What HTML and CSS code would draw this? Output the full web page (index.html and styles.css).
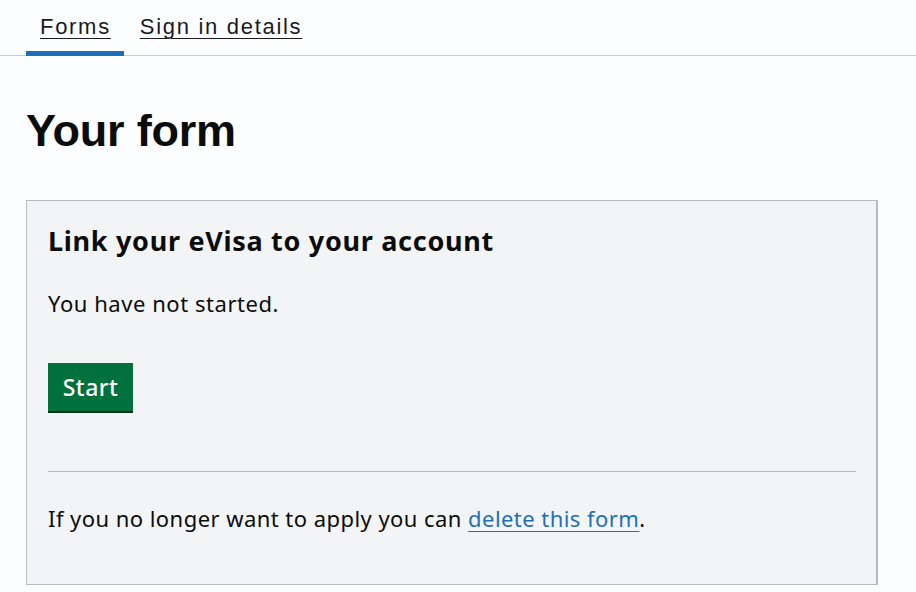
FILE: index.html
```html
<!DOCTYPE html>
<html lang="en">
<head>
<meta charset="utf-8">
<title>Your form</title>
<link rel="stylesheet" href="styles.css">
</head>
<body>
<nav class="tabs">
  <a class="tab tab-active" href="#">Forms</a>
  <a class="tab tab-link" href="#">Sign in details</a>
</nav>
<main class="main">
  <h1 class="title">Your form</h1>
  <section class="card">
    <h2 class="card-title">Link your eVisa to your account</h2>
    <p class="status">You have not started.</p>
    <button class="btn-start" type="button">Start</button>
    <hr class="divider">
    <p class="note">If you no longer want to apply you can <a class="link" href="#">delete this form</a>.</p>
  </section>
</main>
</body>
</html>
```
FILE: styles.css
```css
html, body {
  margin: 0;
  padding: 0;
}
body {
  background: #fcfdfe;
  color: #0b0c0c;
  font-family: "Noto Sans", "Liberation Sans", Arial, sans-serif;
  width: 916px;
  height: 592px;
  overflow: hidden;
}
.tabs {
  display: flex;
  align-items: flex-end;
  gap: 16px;
  padding-left: 26px;
  height: 56px;
  border-bottom: 1px solid #c9cacc;
  box-sizing: border-box;
}
.tab {
  font-family: "Liberation Sans", Arial, sans-serif;
  font-size: 22px;
  letter-spacing: 1.7px;
  color: #1a1a1f;
  line-height: 26px;
  text-decoration: underline;
  text-decoration-thickness: 1px;
  text-underline-offset: 4px;
  padding-bottom: 15px;
}
.tab-active {
  padding: 0 13px 11px 14px;
  border-bottom: 5px solid #1d70b8;
  margin-bottom: -1px;
}
.main {
  padding: 0 38px 0 26px;
}
.title {
  margin: 49px 0 0;
  font-family: "Liberation Sans", Arial, sans-serif;
  font-size: 45px;
  line-height: 52px;
  font-weight: 700;
  letter-spacing: -0.2px;
}
.card {
  margin-top: 43px;
  width: 852px;
  height: 385px;
  box-sizing: border-box;
  background: #f3f4f6;
  border: 1px solid #b9bbbd;
  border-right-width: 2px;
  padding: 24px 20px 0 21px;
}
.card-title {
  margin: 0;
  font-size: 27px;
  letter-spacing: 0.7px;
  line-height: 32px;
  font-weight: 700;
}
.status {
  margin: 32px 0 0;
  font-size: 22px;
  letter-spacing: 0.55px;
  line-height: 28px;
}
.btn-start {
  margin-top: 46px;
  display: block;
  width: 85px;
  height: 48px;
  background: #00703c;
  color: #ffffff;
  border: 0;
  border-radius: 0;
  box-shadow: 0 2px 0 #002d18;
  font-family: inherit;
  font-size: 23px;
  letter-spacing: 0.5px;
  font-weight: 500;
  padding: 0;
}
.divider {
  margin: 60px 0 0;
  border: 0;
  border-top: 1px solid #b9bbbd;
  height: 0;
}
.note {
  margin: 32px 0 0;
  font-size: 22px;
  letter-spacing: 0.45px;
  line-height: 28px;
}
.link {
  color: #1d70b8;
  text-decoration: underline;
  text-decoration-thickness: 1px;
  text-underline-offset: 4px;
}
```
